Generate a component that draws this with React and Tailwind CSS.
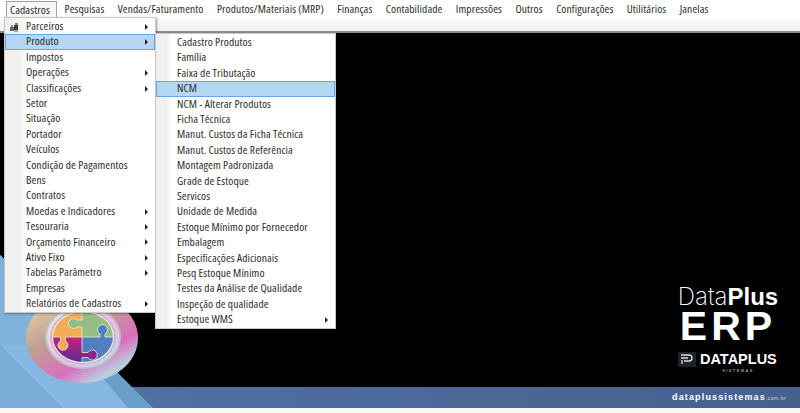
const topMenu = ['Cadastros', 'Pesquisas', 'Vendas/Faturamento', 'Produtos/Materiais (MRP)', 'Finanças', 'Contabilidade', 'Impressões', 'Outros', 'Configurações', 'Utilitários', 'Janelas']

const cadastros = [
  { label: 'Parceiros', arrow: true, icon: true },
  { label: 'Produto', arrow: true, active: true },
  { label: 'Impostos' },
  { label: 'Operações', arrow: true },
  { label: 'Classificações', arrow: true },
  { label: 'Setor' },
  { label: 'Situação' },
  { label: 'Portador' },
  { label: 'Veículos' },
  { label: 'Condição de Pagamentos' },
  { label: 'Bens' },
  { label: 'Contratos' },
  { label: 'Moedas e Indicadores', arrow: true },
  { label: 'Tesouraria', arrow: true },
  { label: 'Orçamento Financeiro', arrow: true },
  { label: 'Ativo Fixo', arrow: true },
  { label: 'Tabelas Parâmetro', arrow: true },
  { label: 'Empresas' },
  { label: 'Relatórios de Cadastros', arrow: true }
]

const produto = [
  { label: 'Cadastro Produtos' },
  { label: 'Família' },
  { label: 'Faixa de Tributação' },
  { label: 'NCM', active: true },
  { label: 'NCM - Alterar Produtos' },
  { label: 'Ficha Técnica' },
  { label: 'Manut. Custos da Ficha Técnica' },
  { label: 'Manut. Custos de Referência' },
  { label: 'Montagem Padronizada' },
  { label: 'Grade de Estoque' },
  { label: 'Servicos' },
  { label: 'Unidade de Medida' },
  { label: 'Estoque Mínimo por Fornecedor' },
  { label: 'Embalagem' },
  { label: 'Especificações Adicionais' },
  { label: 'Pesq Estoque Mínimo' },
  { label: 'Testes da Análise de Qualidade' },
  { label: 'Inspeção de qualidade' },
  { label: 'Estoque WMS', arrow: true }
]

function MenuRow({ item }) {
  return (
    <div className={`relative flex h-[15.4px] items-center border pl-[20px] ${item.active ? 'border-[#62a8ea] bg-[#b6d7f4]' : 'border-transparent'}`}>
      {item.icon && (
        <svg className="absolute left-[2px] top-[1px] h-[13px] w-[13px]" viewBox="0 0 13 13">
          <rect x="2" y="6" width="4" height="4" fill="#666" />
          <rect x="6" y="4" width="4" height="5" fill="#3a3a3a" />
          <rect x="7" y="2" width="3" height="2" fill="#8a8a6a" />
          <rect x="3" y="4" width="2" height="2" fill="#9a9a7a" />
          <rect x="6" y="9" width="4" height="2" fill="#aaa" />
        </svg>
      )}
      <span className="mb-[2px] whitespace-nowrap">{item.label}</span>
      {item.arrow && <span className="absolute right-[6px] top-[4px] h-0 w-0 border-y-[3px] border-l-[3px] border-y-transparent border-l-[#222]" />}
    </div>
  )
}

function Background() {
  return (
    <svg className="absolute inset-0 h-full w-full" viewBox="0 33 800 375">
      <defs>
        <linearGradient id="band" x1="0" x2="1" y1="0" y2="0">
          <stop offset="0" stopColor="#5273a3" />
          <stop offset="1" stopColor="#46608f" />
        </linearGradient>
        <linearGradient id="ring" x1="0.1" x2="0.8" y1="0" y2="1">
          <stop offset="0" stopColor="#e8d8b0" />
          <stop offset="0.4" stopColor="#c0a090" />
          <stop offset="0.72" stopColor="#da6fc0" />
          <stop offset="0.9" stopColor="#b8d0e0" />
          <stop offset="1" stopColor="#8fb5c5" />
        </linearGradient>
        <linearGradient id="ringInner" x1="0" x2="1" y1="0" y2="1">
          <stop offset="0" stopColor="#f2ebd8" />
          <stop offset="0.6" stopColor="#f6b8ea" />
          <stop offset="1" stopColor="#a8e4f0" />
        </linearGradient>
        <linearGradient id="magenta" x1="0" x2="0" y1="0" y2="1">
          <stop offset="0" stopColor="#c8237c" />
          <stop offset="1" stopColor="#5e2a92" />
        </linearGradient>
        <clipPath id="disc">
          <ellipse cx="83" cy="337" rx="30" ry="25" />
        </clipPath>
      </defs>
      <rect x="0" y="387" width="800" height="21" fill="url(#band)" />
      <polygon points="0,255 153,408 0,408" fill="#6a9dc8" />
      <polygon points="0,255 128,408 63,408 0,345" fill="#85b7e2" />
      <polygon points="0,255 90,345 0,345" fill="#7fb1db" />
      <polygon points="0,345 63,408 0,408" fill="#7cadd8" />
      <ellipse cx="82" cy="338" rx="56" ry="45" fill="url(#ring)" />
      <ellipse cx="83" cy="337" rx="38" ry="32" fill="#b9c4c8" />
      <ellipse cx="83" cy="337" rx="36" ry="30" fill="url(#ringInner)" />
      <ellipse cx="83" cy="337" rx="33" ry="27.5" fill="#c8b8c4" />
      <ellipse cx="83" cy="337" rx="31" ry="26" fill="#f5f0ee" />
      <g clipPath="url(#disc)">
        <rect x="53" y="312" width="29" height="25" fill="#f0ad55" />
        <rect x="82" y="312" width="31" height="25" fill="#93bd84" />
        <rect x="53" y="337" width="29" height="25" fill="url(#magenta)" />
        <rect x="82" y="337" width="31" height="25" fill="#4f7fbf" />
        <g stroke="#f0e8e8" strokeWidth="0.8">
          <path d="M82 320H77A5 5 0 1 0 77 327H82" fill="#93bd84" />
          <path d="M100 337V334A5 5 0 1 1 105 334V337" fill="#4f7fbf" />
          <path d="M60.5 337V341A5 5 0 1 0 65.5 341V337" fill="#f0ad55" />
          <path d="M82 352.5H88A5 5 0 1 1 88 357.5H82" fill="#8a2688" />
          <path d="M82 312V320M82 327V352.5M82 357.5V362M53 337H60.5M65.5 337H100M105 337H113" fill="none" />
        </g>
      </g>
    </svg>
  )
}

export default function App() {
  return (
    <div className="relative flex h-[413px] w-[800px] flex-col overflow-hidden bg-white font-['Open_Sans','Noto_Sans',sans-serif] text-[11.5px] tracking-[0.1px] text-[#2c2c2c] [font-stretch:75%]">
      <div className="flex h-[18px] items-center bg-white pl-[2.5px]">
        {topMenu.map((name, i) => (
          <span key={name} className={`flex h-[18px] items-center whitespace-nowrap ${i === 0 ? 'ml-[3px] mr-[1px] mt-[1px] border border-b-0 border-[#a0a0a0] bg-[#f7f7f7] pl-[3.5px] pr-[6px]' : 'px-[6.7px]'}`}>
            {name}
          </span>
        ))}
      </div>
      <div className="h-[15px] border-b-2 border-[#8c8c8c] bg-gradient-to-b from-[#fbfbfb] to-[#f1f1f1]" />
      <div className="relative flex-1 bg-black tracking-normal [font-stretch:100%]">
        <Background />
        <div className="absolute left-[678px] top-[252px] flex w-[100px] flex-col items-center font-['Liberation_Sans',sans-serif] text-white">
          <div className="whitespace-nowrap font-['Inter',sans-serif] text-[24px] font-extralight leading-[24px]">Data<span className="font-['Liberation_Sans',sans-serif] font-bold">Plus</span></div>
          <div className="text-[41px] font-bold leading-[35px] tracking-[4px]">ERP</div>
          <div className="mt-[8px] flex w-[100px] items-center gap-[4px]">
            <svg className="h-[15px] w-[18px] shrink-0" viewBox="0 0 18 15">
              <rect width="18" height="15" fill="#222" />
              <path d="M3 3h8a3 3 0 0 1 0 6H6M3 6h7M4 12V8" fill="none" stroke="#cfe0ee" strokeWidth="1.3" />
            </svg>
            <span className="whitespace-nowrap text-[14.5px] font-bold leading-none">DATAPLUS</span>
          </div>
          <div className="ml-[20px] mt-[1px] text-[4px] font-bold leading-[5px] tracking-[1.4px] text-[#999]">SISTEMAS</div>
        </div>
        <div className="absolute left-[672px] top-[359px] whitespace-nowrap font-['Liberation_Sans',sans-serif] text-[9px] font-bold leading-[11px] tracking-[1.15px] text-white">
          dataplussistemas<span className="text-[5px] font-normal tracking-[0.5px] text-[#d0d8e8]">.com.br</span>
        </div>
      </div>
      <div className="h-[5px] bg-[#f8f8f8]" />

      <div className="absolute left-[4px] top-[17px] w-[152px] border border-[#c8c8c8] bg-gradient-to-r from-[#f0f0f0] from-[14px] to-white to-[22px] py-[1px] shadow-[1px_1px_2px_rgba(0,0,0,0.35)]">
        {cadastros.map((item) => (
          <MenuRow key={item.label} item={item} />
        ))}
      </div>
      <div className="absolute left-[155px] top-[33px] w-[181px] border border-[#c8c8c8] bg-gradient-to-r from-[#f0f0f0] from-[10px] to-white to-[16px] py-[1px] shadow-[1px_1px_2px_rgba(0,0,0,0.35)]">
        {produto.map((item) => (
          <MenuRow key={item.label} item={item} />
        ))}
      </div>
    </div>
  )
}
